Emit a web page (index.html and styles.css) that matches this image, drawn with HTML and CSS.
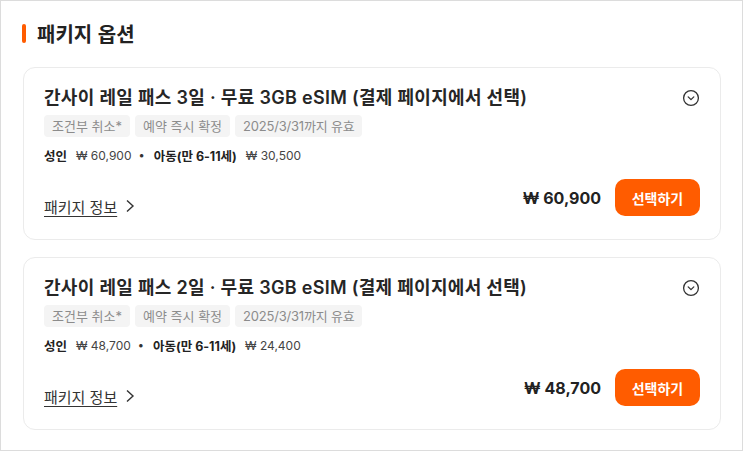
FILE: index.html
```html
<!DOCTYPE html>
<html lang="ko">
<head>
<meta charset="utf-8">
<link rel="stylesheet" href="styles.css">
</head>
<body>
<div class="frame">
  <h2 class="section-title"><span class="bar"></span>패키지 옵션</h2>
  <div class="card">
    <div class="card-head">
      <div class="title">간사이 레일 패스 3일 · 무료 3GB eSIM (결제 페이지에서 선택)</div>
      <svg class="toggle" width="20" height="20" viewBox="0 0 20 20"><circle cx="10" cy="10" r="7.4" fill="none" stroke="#333" stroke-width="1.3"/><path d="M7.2 8.9 L10 11.6 L12.8 8.9" fill="none" stroke="#333" stroke-width="1.3" stroke-linecap="round" stroke-linejoin="round"/></svg>
    </div>
    <div class="tags">
      <span class="tag">조건부 취소*</span>
      <span class="tag">예약 즉시 확정</span>
      <span class="tag">2025/3/31까지 유효</span>
    </div>
    <div class="prices">
      <b>성인</b><span class="amt">₩ 60,900</span><span class="dot">•</span><b>아동(만 6-11세)</b><span class="amt">₩ 30,500</span>
    </div>
    <div class="card-foot">
      <a class="info">패키지 정보<svg width="14" height="16" viewBox="0 0 14 16"><path d="M4 2.5 L10 8 L4 13.5" fill="none" stroke="#333" stroke-width="1.4"/></svg></a>
      <div class="buy">
        <span class="total">₩ 60,900</span>
        <button class="btn">선택하기</button>
      </div>
    </div>
  </div>
  <div class="card">
    <div class="card-head">
      <div class="title">간사이 레일 패스 2일 · 무료 3GB eSIM (결제 페이지에서 선택)</div>
      <svg class="toggle" width="20" height="20" viewBox="0 0 20 20"><circle cx="10" cy="10" r="7.4" fill="none" stroke="#333" stroke-width="1.3"/><path d="M7.2 8.9 L10 11.6 L12.8 8.9" fill="none" stroke="#333" stroke-width="1.3" stroke-linecap="round" stroke-linejoin="round"/></svg>
    </div>
    <div class="tags">
      <span class="tag">조건부 취소*</span>
      <span class="tag">예약 즉시 확정</span>
      <span class="tag">2025/3/31까지 유효</span>
    </div>
    <div class="prices">
      <b>성인</b><span class="amt">₩ 48,700</span><span class="dot">•</span><b>아동(만 6-11세)</b><span class="amt">₩ 24,400</span>
    </div>
    <div class="card-foot">
      <a class="info">패키지 정보<svg width="14" height="16" viewBox="0 0 14 16"><path d="M4 2.5 L10 8 L4 13.5" fill="none" stroke="#333" stroke-width="1.4"/></svg></a>
      <div class="buy">
        <span class="total">₩ 48,700</span>
        <button class="btn">선택하기</button>
      </div>
    </div>
  </div>
</div>
</body>
</html>
```
FILE: styles.css
```css
* { box-sizing: border-box; }
html, body { margin: 0; padding: 0; background: #fff; }
body {
  font-family: Inter, "Noto Sans CJK KR", sans-serif;
  color: #222;
}
.frame {
  width: 743px;
  height: 451px;
  border: 1px solid #dcdcdc;
  padding: 20px 21px 0 22px;
  overflow: hidden;
}
.section-title {
  display: flex;
  align-items: center;
  margin: 0 0 22px 0;
  height: 24px;
  font-family: "Noto Sans CJK KR", sans-serif;
  font-size: 20px;
  font-weight: 700;
  color: #222;
}
.bar {
  width: 4px;
  height: 19px;
  border-radius: 2px;
  background: #ff5c00;
  margin-right: 11px;
  margin-left: -1px;
}
.card {
  border: 1px solid #ebebeb;
  border-radius: 12px;
  padding: 19px 20px 23px 20px;
  margin-bottom: 17px;
}
.card-head {
  display: flex;
  justify-content: space-between;
  align-items: center;
  height: 22px;
}
.title {
  font-size: 18px;
  font-weight: 600;
  color: #262626;
  line-height: 22px;
  letter-spacing: 0.3px;
}
.toggle { margin-right: -1px; }
.tags {
  display: flex;
  gap: 5px;
  margin-top: 6px;
}
.tag {
  height: 22px;
  line-height: 22px;
  padding: 0 8px;
  background: #f4f4f4;
  border-radius: 4px;
  font-size: 13px;
  color: #8c8c8c;
}
.tag:last-child { letter-spacing: -0.2px; }
.prices {
  display: flex;
  align-items: center;
  height: 20px;
  margin-top: 8px;
  font-size: 12.5px;
  color: #333;
}
.prices b { font-weight: 700; color: #222; }
.amt { margin-left: 9px; color: #444; font-size: 12px; }
.dot { margin: 0 9px 0 7px; font-size: 11px; }
.card-foot {
  display: flex;
  justify-content: space-between;
  margin-top: 14px;
}
.info {
  align-self: flex-end;
  display: flex;
  align-items: center;
  gap: 6px;
  height: 20px;
  font-family: "Noto Sans CJK KR", sans-serif;
  font-size: 15px;
  color: #333;
  text-decoration: underline;
  text-underline-offset: 3px;
}
.buy {
  display: flex;
  align-items: center;
  gap: 14px;
}
.total {
  font-size: 16px;
  font-weight: 700;
  color: #222;
}
.btn {
  width: 85px;
  height: 37px;
  border: none;
  border-radius: 10px;
  background: #ff5c00;
  color: #fff;
  font-family: "Noto Sans CJK KR", sans-serif;
  font-size: 14px;
  font-weight: 700;
  padding: 0;
}
```
